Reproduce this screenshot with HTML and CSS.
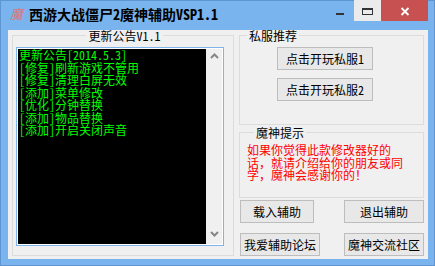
FILE: index.html
```html
<!DOCTYPE html>
<html lang="zh-CN">
<head>
    <meta charset="UTF-8">
    <title>西游大战僵尸2魔神辅助VSP1.1</title>
    <link rel="stylesheet" href="styles.css">
</head>
<body>

    <div class="window">
        <div class="titlebar">
            <span class="app-icon">魔</span>
            <span class="title">西游大战僵尸2魔神辅助VSP1.1</span>
            <div class="caption-buttons">
                <span class="cap-btn minimize">
                    <svg width="26" height="21"><rect x="8" y="13" width="8" height="2" fill="#333"/></svg>
                </span>
                <span class="cap-btn maximize">
                    <svg width="27" height="21">
                        <rect x="8.5" y="8.5" width="10" height="6" fill="none" stroke="#333"/>
                        <rect x="8" y="8" width="11" height="2" fill="#333"/>
                    </svg>
                </span>
                <span class="cap-btn close">
                    <svg width="47" height="21"><path d="M20.5 8 L27.5 15 M27.5 8 L20.5 15" stroke="#fff" stroke-width="1.8"/></svg>
                </span>
            </div>
        </div>

        <div class="client">
            <fieldset class="group notice">
                <legend>更新公告V1.1</legend>
                <div class="listbox">
                    <div class="list-text">
                        <div>更新公告[2014.5.3]</div>
                        <div>[修复]刷新游戏不管用</div>
                        <div>[修复]清理白屏无效</div>
                        <div>[添加]菜单修改</div>
                        <div>[优化]分钟替换</div>
                        <div>[添加]物品替换</div>
                        <div>[添加]开启关闭声音</div>
                    </div>
                    <div class="scrollbar">
                        <svg width="9" height="6"><polyline points="1,5 4.5,1.5 8,5" fill="none" stroke="#868686" stroke-width="2"/></svg>
                        <svg width="9" height="6"><polyline points="1,1 4.5,4.5 8,1" fill="none" stroke="#868686" stroke-width="2"/></svg>
                    </div>
                </div>
            </fieldset>

            <div class="side">
                <fieldset class="group servers">
                    <legend>私服推荐</legend>
                    <button class="btn server-btn">点击开玩私服1</button>
                    <button class="btn server-btn">点击开玩私服2</button>
                </fieldset>

                <fieldset class="group tips">
                    <legend>魔神提示</legend>
                    <p class="tip-text">如果你觉得此款修改器好的话，就请介绍给你的朋友或同学，魔神会感谢你的！</p>
                </fieldset>

                <div class="actions">
                    <button class="btn short">载入辅助</button>
                    <button class="btn">退出辅助</button>
                    <button class="btn">我爱辅助论坛</button>
                    <button class="btn">魔神交流社区</button>
                </div>
            </div>
        </div>
    </div>

</body>
</html>
```

FILE: styles.css
```css
* {
    box-sizing: border-box;
}

body {
    margin: 0;
    font-family: "Noto Sans CJK SC", sans-serif;
    font-feature-settings: "hwid";
}

.window {
    width: 435px;
    height: 266px;
    background-color: #79b4ee;
    box-shadow: inset 0 0 0 1px #5f95d0;
    display: flex;
    flex-direction: column;
}

/* Title bar */
.titlebar {
    height: 30px;
    flex-shrink: 0;
    display: flex;
    align-items: flex-start;
}

.app-icon {
    width: 12px;
    margin: 6px 0 0 10px;
    font-size: 13px;
    line-height: 15px;
    font-style: italic;
    color: #e07474;
}

.title {
    margin: 6px 0 0 7px;
    font-size: 14px;
    line-height: 16px;
    font-weight: bold;
    color: #000;
}

.caption-buttons {
    margin-left: auto;
    margin-right: 7px;
    display: flex;
}

.cap-btn {
    height: 21px;
    display: block;
}

.cap-btn svg {
    display: block;
}

.maximize {
    background-color: #ebebeb;
}

.close {
    background-color: #c75050;
}

/* Client area */
.client {
    flex: 1;
    margin: 0 7px 9px 8px;
    padding: 0 0 3px 4px;
    background-color: #f0f0f0;
    display: flex;
    gap: 5px;
    font-size: 12px;
}

.group {
    margin: 0;
    padding: 0;
    min-width: 0;
    border: 1px solid #dcdcdc;
}

.group legend {
    padding: 0 2px;
    margin-left: 7px;
    font-size: 12px;
    line-height: 11px;
    color: #000;
}

.notice {
    width: 222px;
    padding: 6px 0 0 3px;
}

.notice legend {
    margin: 0 auto;
}

.listbox {
    width: 208px;
    height: 199px;
    border: 1px solid #7eb4ea;
    padding: 1px;
    background-color: #fff;
    display: flex;
}

.list-text {
    flex: 1;
    background-color: #000;
    color: #00ff00;
    line-height: 12.5px;
    padding-left: 1px;
}

.scrollbar {
    width: 16px;
    background-color: #f0f0f0;
    padding: 4px 0 7px;
    display: flex;
    flex-direction: column;
    justify-content: space-between;
    align-items: center;
}

.scrollbar svg {
    display: block;
}

/* Right column */
.side {
    width: 185px;
    display: flex;
    flex-direction: column;
}

.side > * {
    flex: none;
}

.servers {
    height: 95px;
    padding-top: 6px;
}

.btn {
    font-family: "Noto Sans CJK SC", sans-serif;
    font-feature-settings: "hwid";
    font-size: 12px;
    color: #000;
    background-color: #e8e8e8;
    border: 1px solid #bdbdbd;
    border-radius: 0;
    padding: 0;
    height: 23px;
}

.server-btn {
    display: block;
    width: 96px;
    margin-left: 37px;
}

.server-btn + .server-btn {
    margin-top: 8px;
}

.tips {
    height: 71px;
    margin-top: 2px;
    padding: 6px 0 0 7px;
}

.tip-text {
    margin: 0;
    width: 162px;
    line-height: 12.5px;
    color: #ff0000;
    font-feature-settings: normal;
}

.actions {
    margin-top: 2px;
    padding-left: 1px;
    display: grid;
    grid-template-columns: 80px 80px;
    justify-content: space-between;
    row-gap: 10px;
}

.actions .short {
    width: 74px;
}
```
